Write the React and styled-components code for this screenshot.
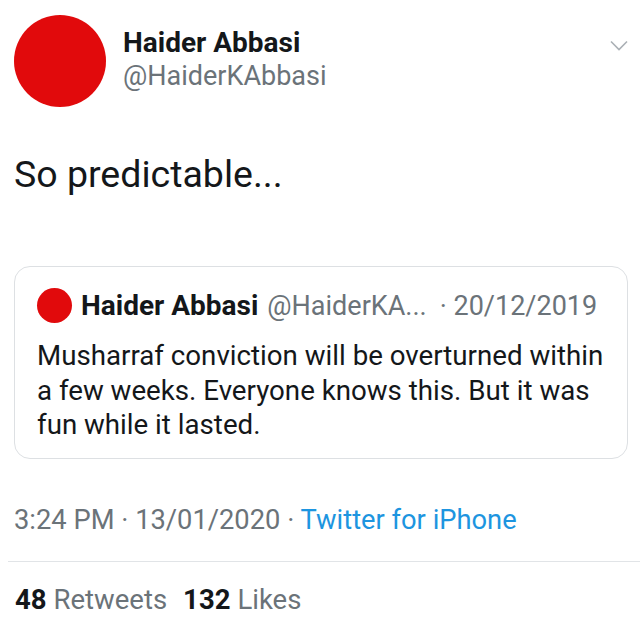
import React from 'react'
import styled, { createGlobalStyle } from 'styled-components'

const GlobalStyle = createGlobalStyle`
  html, body {
    margin: 0;
    padding: 0;
    background: #ffffff;
  }
  body {
    font-family: Roboto, "Liberation Sans", Arial, sans-serif;
    color: #14171a;
  }
`

const Tweet = styled.article`
  width: 640px;
  height: 640px;
  box-sizing: border-box;
  padding-top: 15px;
  overflow: hidden;
`

const Header = styled.header`
  display: flex;
  align-items: flex-start;
  padding: 0 12px 0 14px;
`

const Avatar = styled.div`
  width: ${(p) => p.size}px;
  height: ${(p) => p.size}px;
  border-radius: 50%;
  background: #e10a0c;
  flex-shrink: 0;
`

const Names = styled.div`
  display: flex;
  flex-direction: column;
  margin-left: 17px;
  padding-top: 11px;
  flex: 1;
`

const Name = styled.span`
  font-weight: 700;
  font-size: 28px;
  line-height: 34px;
  color: #14171a;
`

const Handle = styled.span`
  font-size: 27px;
  line-height: 32px;
  color: #6b7379;
`

const Chevron = styled.svg`
  width: 18px;
  height: 11px;
  margin-top: 25px;
`

const Body = styled.p`
  margin: 45px 0 0 14px;
  font-size: 37.5px;
  line-height: 44px;
  color: #14171a;
`

const Quote = styled.section`
  margin: 70px 12px 0 14px;
  border: 1.5px solid #dde0e3;
  border-radius: 16px;
  padding: 21px 10px 15px 22px;
`

const QuoteHead = styled.div`
  display: flex;
  align-items: center;
  white-space: nowrap;
  gap: 9px;
`

const Stamp = styled.span`
  font-size: 27px;
  line-height: 32px;
  color: #6b7379;
  margin-left: ${(p) => p.gap || 0}px;
`

const QuoteText = styled.p`
  margin: 16px 0 0 0;
  font-size: 27.7px;
  line-height: 34.5px;
  color: #14171a;
`

const Meta = styled.div`
  margin: 45px 0 0 14px;
  font-size: 27.3px;
  line-height: 32px;
  color: #6b7379;
`

const Link = styled.span`
  color: #1d95e0;
`

const Divider = styled.hr`
  margin: 25px 0 0 8px;
  border: 0;
  border-top: 1.5px solid #e1e4e7;
`

const Stats = styled.div`
  display: flex;
  gap: 16px;
  margin: 22px 0 0 15px;
  font-size: 27.5px;
  line-height: 32px;
  color: #6b7379;
`

const Count = styled.b`
  color: #14171a;
  font-weight: 700;
  margin-right: 7px;
`

export default function App() {
  return (
    <>
      <GlobalStyle />
      <Tweet>
        <Header>
          <Avatar size={92} />
          <Names>
            <Name>Haider Abbasi</Name>
            <Handle>@HaiderKAbbasi</Handle>
          </Names>
          <Chevron viewBox="0 0 18 11">
            <path d="M1 1.5 L9 9.5 L17 1.5" fill="none" stroke="#aab0b5" strokeWidth="1.6" />
          </Chevron>
        </Header>
        <Body>So predictable...</Body>
        <Quote>
          <QuoteHead>
            <Avatar size={35} />
            <Name>Haider Abbasi</Name>
            <Stamp>@HaiderKA...</Stamp>
            <Stamp gap={4}>· 20/12/2019</Stamp>
          </QuoteHead>
          <QuoteText>
            Musharraf conviction will be overturned within a few weeks. Everyone knows this. But it was fun while it lasted.
          </QuoteText>
        </Quote>
        <Meta>
          3:24 PM · 13/01/2020 · <Link>Twitter for iPhone</Link>
        </Meta>
        <Divider />
        <Stats>
          <span><Count>48</Count>Retweets</span>
          <span><Count>132</Count>Likes</span>
        </Stats>
      </Tweet>
    </>
  )
}
